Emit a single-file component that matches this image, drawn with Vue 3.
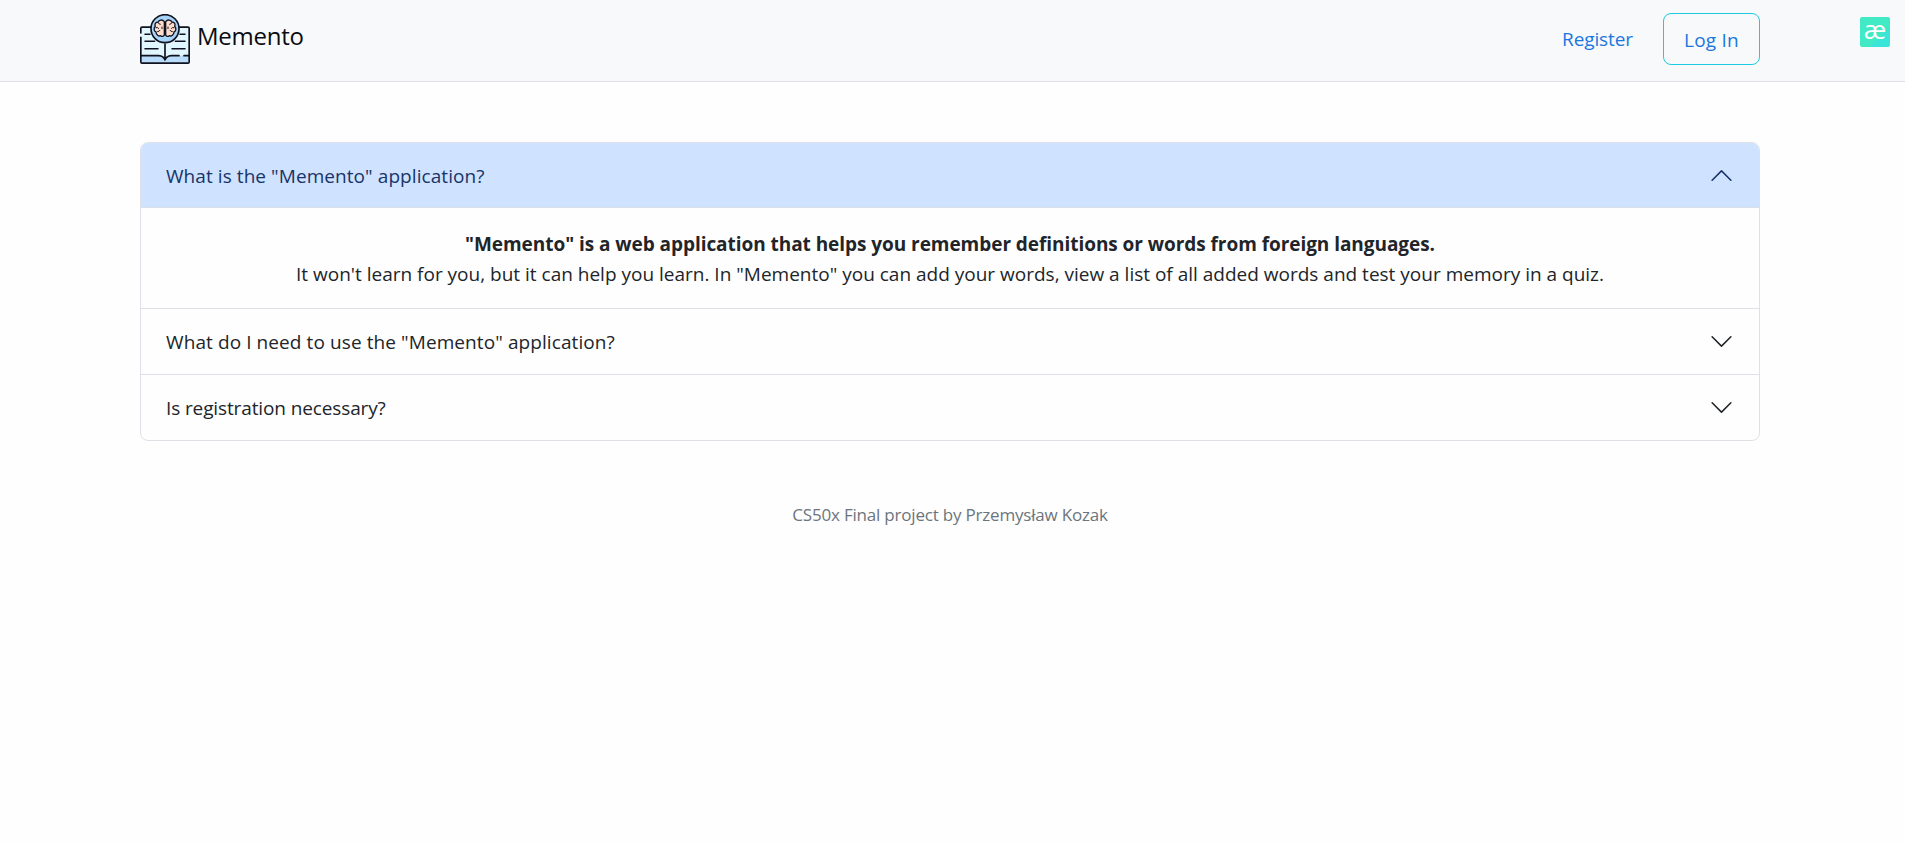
<script setup>
import { ref } from 'vue'

const open = ref(0)
const items = [
  {
    id: 'what',
    question: 'What is the "Memento" application?',
    lead: '"Memento" is a web application that helps you remember definitions or words from foreign languages.',
    text: 'It won\'t learn for you, but it can help you learn. In "Memento" you can add your words, view a list of all added words and test your memory in a quiz.',
  },
  {
    id: 'need',
    question: 'What do I need to use the "Memento" application?',
  },
  {
    id: 'registration',
    question: 'Is registration necessary?',
  },
]
</script>

<template>
  <div class="page">
    <nav class="navbar">
      <div class="container bar">
        <a class="brand">
          <svg class="logo" viewBox="0 0 150 150" fill="none" stroke="#10131f" stroke-width="5" stroke-linecap="round" stroke-linejoin="round">
            <path d="M2.5 40H147.500V147.500H2.500Z" fill="#e2f6ff" stroke="none" />
            <path d="M3 125H56Q71 126 75 138Q79 126 94 125H147V147H3Z" fill="#b9dcfb" stroke="none" />
            <path d="M2.500 70V144Q2.500 147.500 6 147.500H144Q147.500 147.500 147.500 144V43Q147.500 39.500 144 39.500H117" />
            <path d="M33 39.500H6Q2.500 39.500 2.500 43V57" />
            <path d="M3 125H56Q71 126 75 138Q79 126 94 125H117M132 125H147M75 90V138" />
            <path d="M15 61H30M120 61H135M15 82H44M106 82H135M15 104H54M96 104H135" stroke-width="4.500" />
            <circle cx="75" cy="44" r="42" fill="#a9d4fa" />
            <path d="M72 22C67 15 56 18 55 24C46 24 43 31 46 37C40 43 42 52 48 54C48 62 56 68 62 65C67 69 72 67 73 62V24ZM78 22C83 15 94 18 95 24C104 24 107 31 104 37C110 43 108 52 102 54C102 62 94 68 88 65C83 69 78 67 77 62V24Z" fill="#ffdccb" stroke-width="4" />
            <path d="M75 23V65M55 27Q56 31 61 31M48 41Q54 39 56 43M53 53Q58 53 60 49M66 39V44M95 27Q94 31 89 31M102 41Q96 39 94 43M97 53Q92 53 90 49M84 39V44" stroke-width="3" />
          </svg>
          <span class="brand-name">Memento</span>
        </a>
        <div class="links">
          <a class="register">Register</a>
          <a class="login">Log In</a>
        </div>
      </div>
      <div class="badge"><span>æ</span></div>
    </nav>

    <main class="container">
      <div class="accordion">
        <section v-for="(item, i) in items" :key="item.id" class="item">
          <button class="question" :class="{ active: open === i }" @click="open = open === i ? -1 : i">
            <span :class="'q-' + item.id">{{ item.question }}</span>
            <svg class="chevron" viewBox="0 0 16 16" fill="currentColor">
              <path fill-rule="evenodd" d="M1.646 4.646a.5.5 0 0 1 .708 0L8 10.293l5.646-5.647a.5.5 0 0 1 .708.708l-6 6a.5.5 0 0 1-.708 0l-6-6a.5.5 0 0 1 0-.708z" />
            </svg>
          </button>
          <div v-if="open === i && item.lead" class="answer">
            <div><b>{{ item.lead }}</b></div>
            <div><span class="detail">{{ item.text }}</span></div>
          </div>
        </section>
      </div>
    </main>

    <footer class="footer"><span>CS50x Final project by Przemysław Kozak</span></footer>
  </div>
</template>

<style>
body {
  background: #fefefe;
}
</style>

<style scoped>
.page {
  font-family: "Open Sans", "Noto Sans", sans-serif;
  font-size: 19px;
  line-height: 30px;
  color: #212529;
  min-height: 844px;
}
.container {
  width: 1620px;
  margin: 0 auto 0 140px;
}
.navbar {
  position: relative;
  box-sizing: border-box;
  height: 82px;
  background: #f8f9fb;
  border-bottom: 1px solid #dee0e6;
}
.bar {
  display: flex;
  justify-content: space-between;
  align-items: flex-start;
}
.brand {
  display: flex;
  padding-top: 14px;
  gap: 7px;
  color: #0c0d10;
}
.logo {
  width: 50px;
  height: 50px;
}
.brand-name {
  font-size: 24px;
  line-height: 44px;
  letter-spacing: -0.25px;
}
.links {
  display: flex;
  align-items: flex-start;
  gap: 30px;
  padding-top: 13px;
  color: #1a77e0;
}
.register {
  line-height: 52px;
  letter-spacing: -0.1px;
}
.login {
  box-sizing: border-box;
  width: 97px;
  height: 52px;
  border: 1px solid #1ccbe0;
  border-radius: 8px;
  text-align: center;
  line-height: 52px;
  letter-spacing: 0.25px;
}
.badge {
  position: absolute;
  left: 1860px;
  top: 17px;
  width: 30px;
  height: 30px;
  border-radius: 2px;
  background: linear-gradient(135deg, #41eac5 0 66%, #38e5d8 67%);
  color: #fff;
  font-size: 26px;
  font-weight: 500;
  line-height: 24px;
  text-align: center;
}
.accordion {
  margin-top: 60px;
  border: 1px solid #dee2e6;
  border-radius: 8px;
  overflow: hidden;
}
.item + .item {
  border-top: 1px solid #dee2e6;
}
.question {
  display: flex;
  width: 100%;
  height: 65px;
  align-items: center;
  justify-content: space-between;
  padding: 0 25px;
  border: 0;
  background: transparent;
  color: #212529;
  font: inherit;
  text-align: left;
}
.question.active {
  background: #cfe2ff;
  color: #183468;
  border-bottom: 1px solid #d9dfe9;
}
.q-what {
  padding-top: 2px;
  letter-spacing: 0.07px;
}
.q-need {
  letter-spacing: 0.09px;
}
.q-registration {
  letter-spacing: -0.12px;
}
.chevron {
  width: 25px;
  height: 25px;
}
.active .chevron {
  transform: rotate(180deg);
}
.answer {
  padding: 21px 25px 19px;
  text-align: center;
  white-space: nowrap;
}
.answer b {
  letter-spacing: -0.05px;
}
.footer {
  margin: 59px 5px 0 0;
  text-align: center;
  color: #6c757d;
  font-size: 17px;
  letter-spacing: -0.2px;
}
</style>
